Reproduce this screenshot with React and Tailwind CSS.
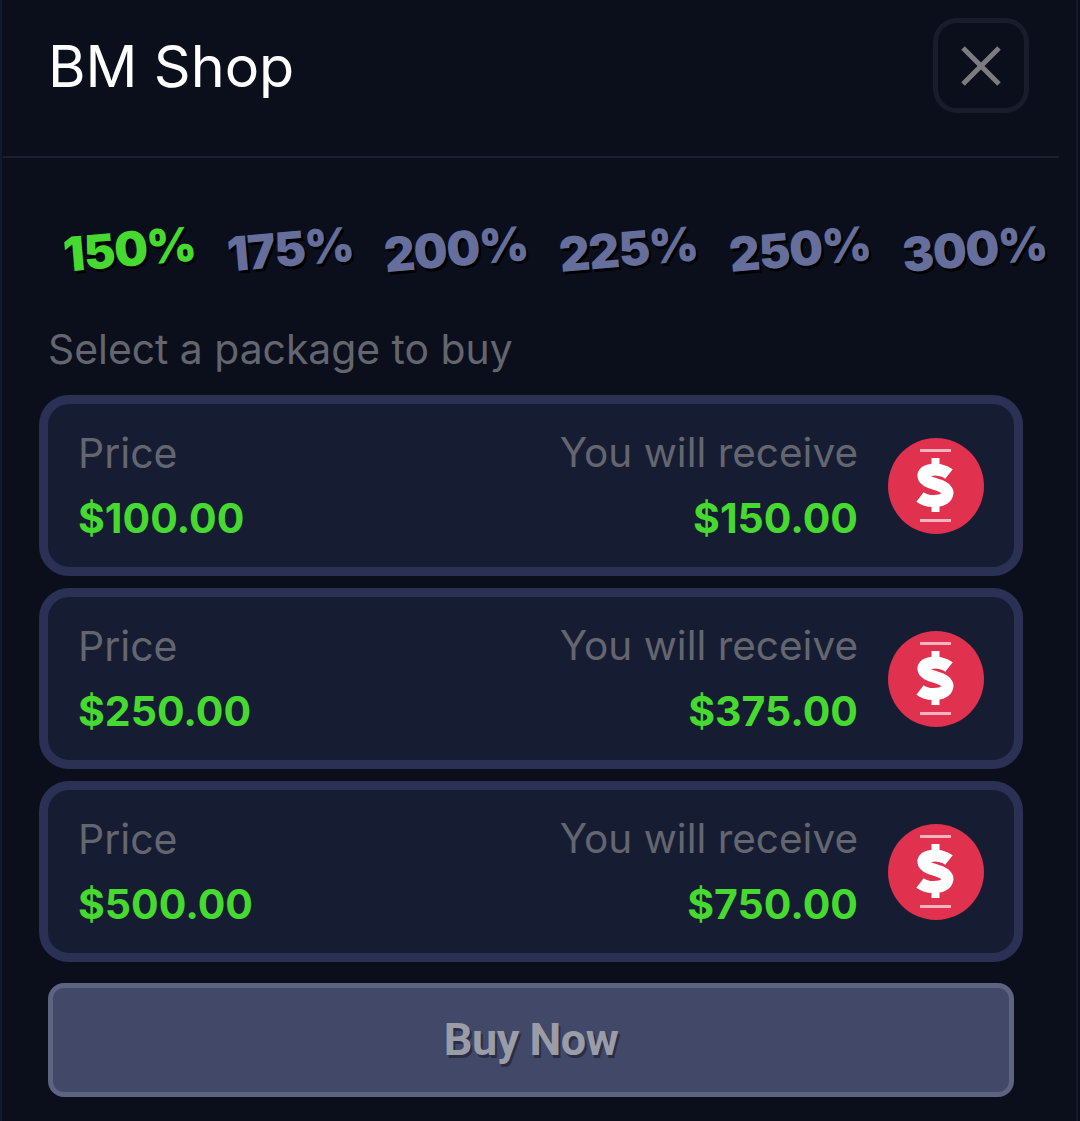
const percents = ['150%', '175%', '200%', '225%', '250%', '300%'];

const packages = [
	{ price: '$100.00', receive: '$150.00' },
	{ price: '$250.00', receive: '$375.00' },
	{ price: '$500.00', receive: '$750.00' }
];

function CoinIcon() {
	return (
		<svg width="96" height="96" viewBox="0 0 96 96" className="shrink-0">
			<circle cx="48" cy="48" r="48" fill="#e0314f" />
			<rect x="32" y="11" width="31" height="3" fill="#f0b5bf" />
			<rect x="32" y="81" width="31" height="3" fill="#f0b5bf" />
			<rect x="43.500" y="20" width="8" height="12" fill="#ffffff" />
			<rect x="43.500" y="62" width="8" height="12" fill="#ffffff" />
			<path
				d="M61 36 C56 32 48 31 43 32 C37 33 34 36 36 40 C38 44 45 45 50 47 C57 49 61 53 59 57 C57 62 50 63 45 63 C40 63 36 62 32 59"
				stroke="#ffffff"
				strokeWidth="12"
				fill="none"
			/>
		</svg>
	);
}

function PackageCard({ price, receive }) {
	return (
		<div className="h-[181px] rounded-[30px] border-[9px] border-[#2a3154] bg-[#161d33] pl-[30px] pr-[30px] flex items-center">
			<div className="flex-1 pb-px">
				<div className="text-[41px] leading-[46px] text-[#64666f]">Price</div>
				<div className="mt-[19px] text-[41px] leading-[46px] font-bold text-[#46d92f]">{price}</div>
			</div>
			<div className="text-right mr-[30px] pb-px">
				<div className="text-[40.5px] leading-[46px] text-[#64666f]">You will receive</div>
				<div className="mt-[19px] text-[41px] leading-[46px] font-bold text-[#46d92f]">{receive}</div>
			</div>
			<CoinIcon />
		</div>
	);
}

export default function App() {
	return (
		<div className="w-[1080px] h-[1121px] overflow-hidden bg-[#0b0f1c] font-['Inter',sans-serif]">
			<div className="w-[1078px] h-full border-x-[2px] border-[#121a2d] pl-px">
				{/* Header */}
				<div className="w-[1056px] h-[158px] border-b-[2px] border-[#1a2030] flex items-start justify-between pl-[45px] pr-[30px] pt-[18px]">
					<h1 className="mt-[13px] text-[57.5px] leading-[70px] text-white">BM Shop</h1>
					<button className="w-[96px] h-[95px] rounded-[24px] border-[5px] border-[#181c2b] flex items-center justify-center">
						<svg width="40" height="42" viewBox="0 0 40 42">
							<path d="M2 3 L38 39 M38 3 L2 39" stroke="#7c7c80" strokeWidth="5" fill="none" />
						</svg>
					</button>
				</div>

				{/* Bonus tabs */}
				<div className="w-[1056px] mt-[55px] pl-[60px] pr-[12px] flex justify-between items-center">
					{percents.map((p, i) => (
						<span
							key={p}
							className={`text-[47.5px] leading-[72px] font-black tracking-[-1px] -rotate-[5deg] [text-shadow:2px_3px_0_#000] ${i === 0 ? 'text-[#46d92f]' : 'text-[#666e9c]'}`}
						>
							{p}
						</span>
					))}
				</div>

				{/* Packages */}
				<div className="pl-[45px] mt-[40px] text-[40.85px] leading-[48px] text-[#64666f]">Select a package to buy</div>
				<div className="pl-[36px] w-[1020px] mt-[22px] flex flex-col gap-[12px]">
					{packages.map((pkg) => (
						<PackageCard key={pkg.price} price={pkg.price} receive={pkg.receive} />
					))}
				</div>

				<button className="ml-[45px] mt-[21px] w-[966px] h-[114px] rounded-[16px] border-[5px] border-[#5e6480] bg-[#424867] text-[45px] font-bold tracking-[-0.5px] text-[#9a9ca8] [text-shadow:2px_3px_0_#2a2d44] font-['Roboto',sans-serif]">
					Buy Now
				</button>
			</div>
		</div>
	);
}
